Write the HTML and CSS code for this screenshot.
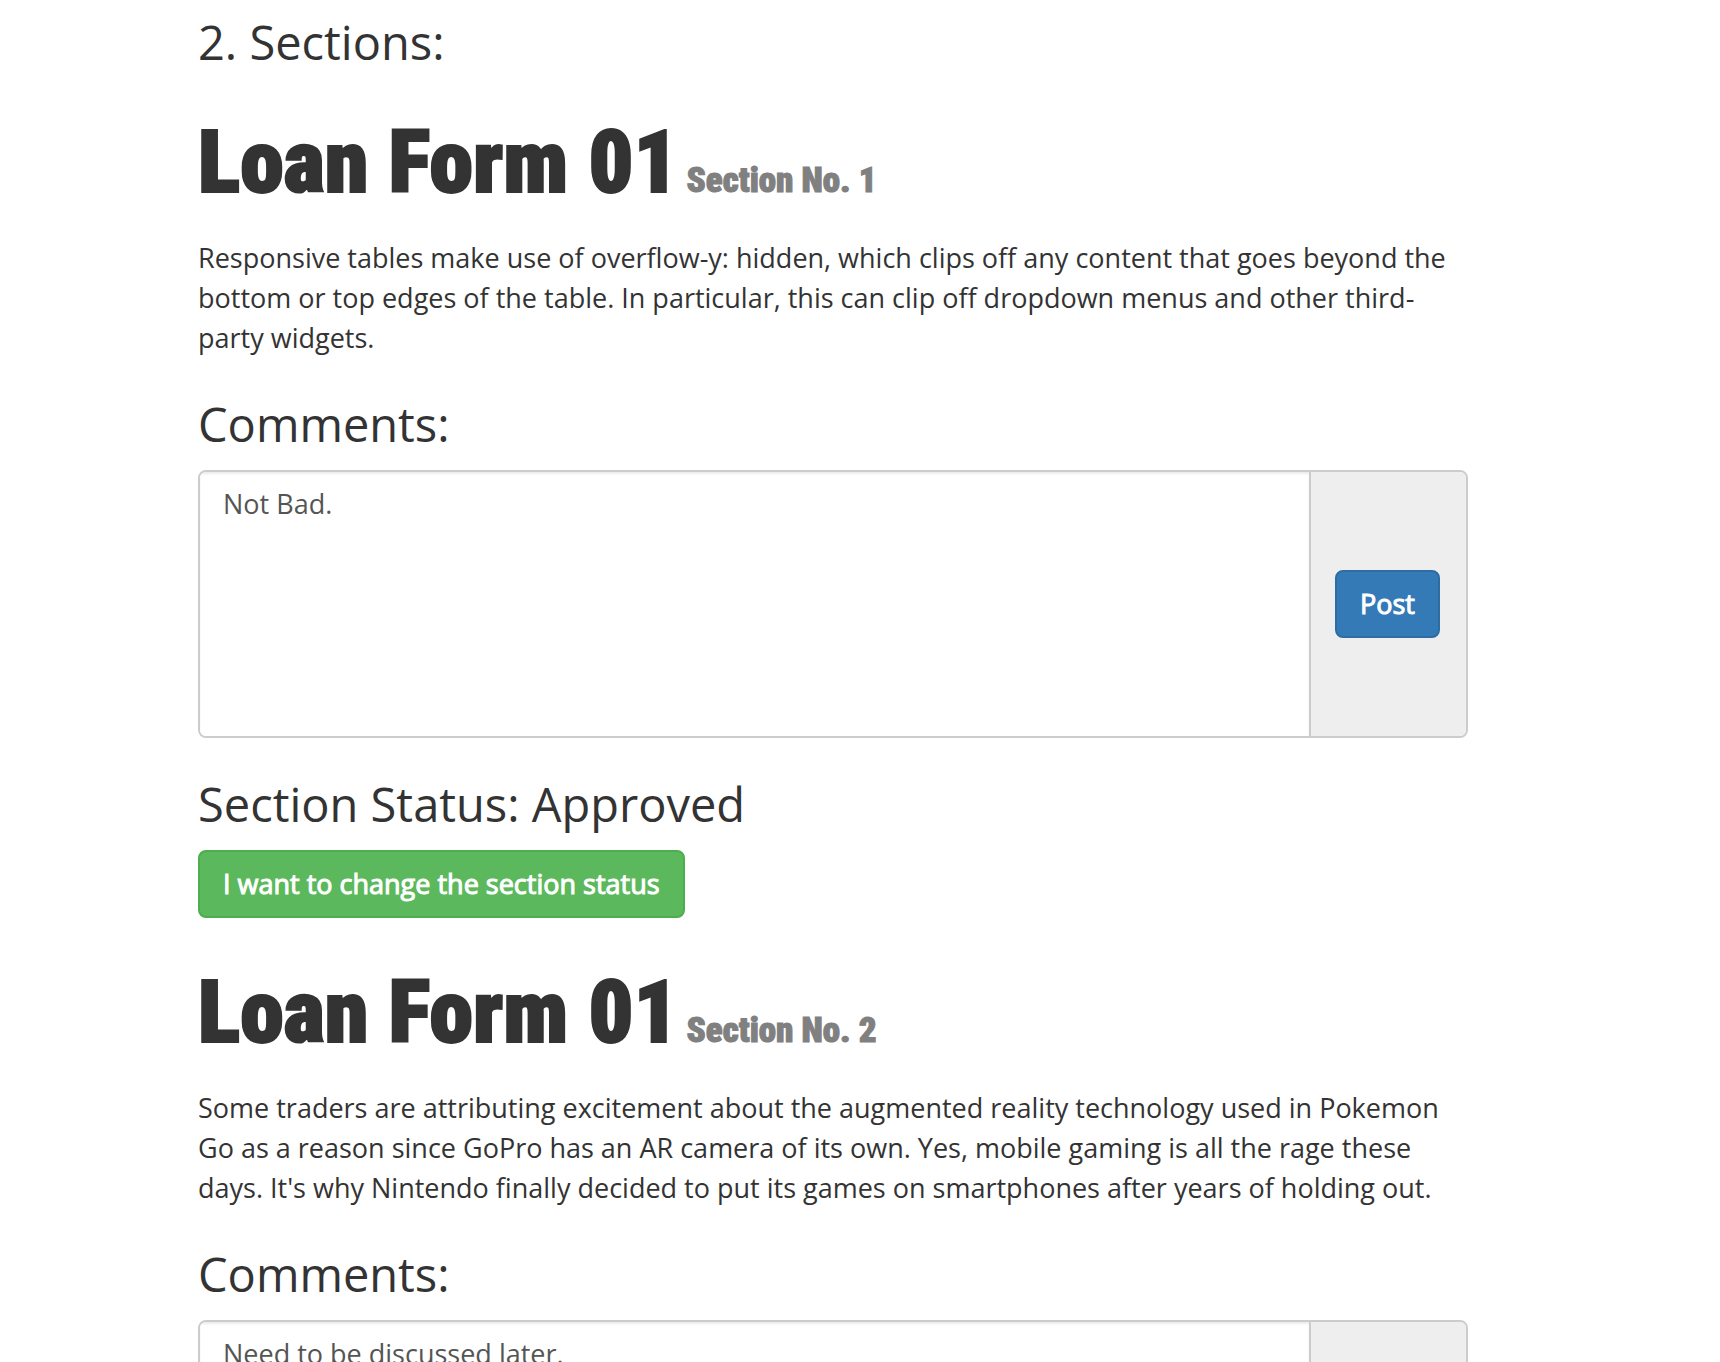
FILE: index.html
```html
<!DOCTYPE html>
<html lang="en">
<head>
<meta charset="utf-8">
<meta name="viewport" content="width=device-width, initial-scale=1">
<title>Loan Form Sections</title>
<link rel="stylesheet" href="styles.css">
</head>
<body>
<main class="container">
  <h3 class="heading">2. Sections:</h3>

  <section class="form-section">
    <h1 class="title">Loan Form 01<small class="subtitle"> Section No. 1</small></h1>
    <p class="text">Responsive tables make use of overflow-y: hidden, which clips off any content that goes beyond the bottom or top edges of the table. In particular, this can clip off dropdown menus and other third-party widgets.</p>
    <h3 class="heading"><label for="comment-1">Comments:</label></h3>
    <form class="input-group">
      <textarea class="comment" id="comment-1">Not Bad.</textarea>
      <div class="addon"><button class="btn btn-primary" type="button">Post</button></div>
    </form>
    <h3 class="heading">Section Status: Approved</h3>
    <button class="btn btn-success" type="button">I want to change the section status</button>
  </section>

  <section class="form-section">
    <h1 class="title">Loan Form 01<small class="subtitle"> Section No. 2</small></h1>
    <p class="text">Some traders are attributing excitement about the augmented reality technology used in Pokemon Go as a reason since GoPro has an AR camera of its own. Yes, mobile gaming is all the rage these days. It's why Nintendo finally decided to put its games on smartphones after years of holding out.</p>
    <h3 class="heading"><label for="comment-2">Comments:</label></h3>
    <form class="input-group">
      <textarea class="comment" id="comment-2">Need to be discussed later.</textarea>
      <div class="addon"><button class="btn btn-primary" type="button">Post</button></div>
    </form>
  </section>
</main>
</body>
</html>
```
FILE: styles.css
```css
* {
  box-sizing: border-box;
}

html {
  scrollbar-width: none;
}

body {
  margin: 0;
  background: #fff;
  color: #333;
  font: 27px/40px "Open Sans", "Noto Sans", sans-serif;
}

.container {
  padding: 16px 252px 40px 198px;
}

.form-section {
  margin-bottom: 20px;
}

.heading {
  margin: 0 0 20px;
  font-size: 47px;
  font-weight: 400;
  line-height: 52px;
}

.title {
  margin: 0 0 28px;
  padding-top: 26px;
  font-family: "Roboto Condensed", "Open Sans", sans-serif;
  font-size: 88px;
  font-weight: 900;
  line-height: 96px;
  -webkit-text-stroke: 2px currentColor;
}

.subtitle {
  color: #808080;
  font-size: 35px;
  line-height: 40px;
  -webkit-text-stroke: 1px currentColor;
}

.text {
  margin: 0 0 40px;
}

.input-group {
  display: flex;
  margin-bottom: 40px;
  border: 2px solid #ccc;
  border-radius: 8px;
  overflow: hidden;
}

.comment {
  flex: 1;
  min-width: 0;
  height: 264px;
  padding: 12px 23px;
  border: 0;
  outline: 0;
  background: #fff;
  box-shadow: inset 0 2px 2px rgba(0, 0, 0, 0.075);
  color: #555;
  font: inherit;
  resize: none;
}

.addon {
  display: flex;
  align-items: center;
  padding: 0 26px 0 24px;
  border-left: 2px solid #ccc;
  background: #eee;
}

.btn {
  padding: 12px 23px;
  border: 2px solid;
  border-radius: 8px;
  color: #fff;
  font: inherit;
  -webkit-text-stroke: 1px currentColor;
  cursor: pointer;
}

.btn-primary {
  border-color: #2e6da4;
  background: #337ab7;
}

.btn-success {
  border-color: #4cae4c;
  background: #5cb85c;
}
```
